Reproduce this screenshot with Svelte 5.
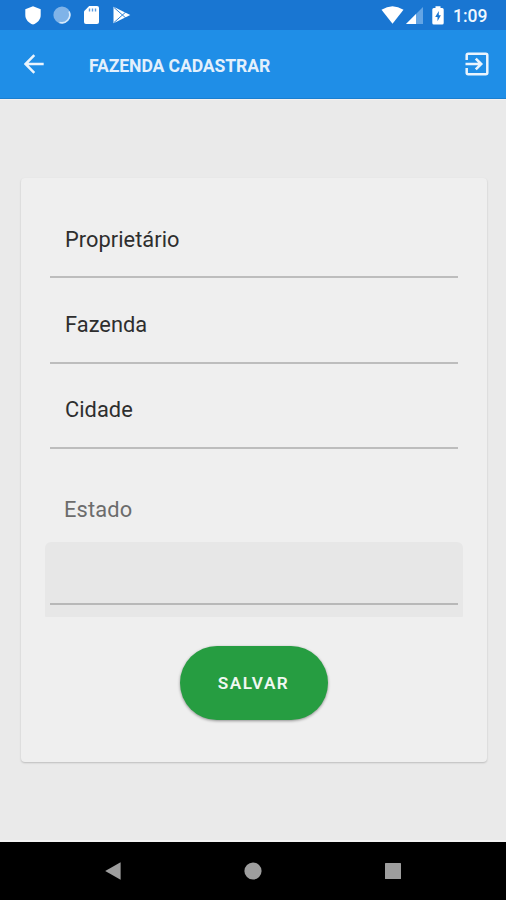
<script lang="ts">
  let farm = $state({ owner: '', name: '', city: '', region: '' })

  const fields = [
    { key: 'owner', label: 'Proprietário' },
    { key: 'name', label: 'Fazenda' },
    { key: 'city', label: 'Cidade' },
  ] as const
</script>

<div class="screen">
  <div class="status-bar">
    <div class="notifications">
      <svg width="16" height="19" viewBox="0 0 16 19">
        <path d="M8 0.3 L15.7 3.2 V9 C15.7 13.5 12.4 17 8 18.6 C3.6 17 0.3 13.5 0.3 9 V3.2 Z" fill="#fff" />
      </svg>
      <svg class="sync" width="18" height="18" viewBox="0 0 18 18">
        <circle cx="9" cy="9" r="8.6" fill="#7fb3e8" />
        <path d="M16 5.5 A7.9 7.9 0 0 1 6.5 16.4" fill="none" stroke="#d8eafb" stroke-width="1.6" />
      </svg>
      <svg class="sd" width="15" height="18" viewBox="0 0 15 18">
        <path d="M5.2 0 H13 Q15 0 15 2 V16 Q15 18 13 18 H2 Q0 18 0 16 V5.2 Z" fill="#fff" />
        <path d="M5.5 2.5 V5.6 M8.5 2.5 V5.6 M11.5 2.5 V5.6" stroke="#5b9bdf" stroke-width="1.4" />
      </svg>
      <svg class="play" width="18" height="18" viewBox="0 0 18 18">
        <path d="M0.5 0.8 L17.3 9 L0.5 17.2 Z" fill="#fff" />
        <path d="M1 1.5 L12.8 12 M1 16.5 L12.8 6" stroke="#1976d2" stroke-width="0.9" />
      </svg>
    </div>
    <div class="system">
      <svg width="23" height="18" viewBox="0 0 23 18">
        <path d="M0.5 3.7 Q11.5 -3.4 22.5 3.7 L11.5 17.8 Z" fill="#fff" />
      </svg>
      <svg class="signal" width="17" height="17" viewBox="0 0 17 17">
        <path d="M17 0 V17 H0 Z" fill="#64a5e5" />
        <path d="M10 7 V17 H0 Z" fill="#fff" />
      </svg>
      <svg class="battery" width="12" height="19" viewBox="0 0 12 19">
        <path d="M3.5 0.3 H8.5 V2 H10.2 Q11.7 2 11.7 3.5 V17 Q11.7 18.6 10.2 18.6 H1.8 Q0.3 18.6 0.3 17 V3.5 Q0.3 2 1.8 2 H3.5 Z" fill="#fff" />
        <path d="M6.8 5 L3.2 11 H5.5 V15.2 L8.9 9.3 H6.8 Z" fill="#1976d2" />
      </svg>
      <span class="clock">1:09</span>
    </div>
  </div>

  <header class="toolbar">
    <button class="icon-btn" aria-label="Voltar">
      <svg width="20" height="20" viewBox="0 0 20 20">
        <path d="M19.7 10 H1.8 M10.3 1.2 L1.5 10 L10.3 18.8" fill="none" stroke="#eaf4fd" stroke-width="2.5" />
      </svg>
    </button>
    <h1>FAZENDA CADASTRAR</h1>
    <button class="icon-btn exit" aria-label="Sair">
      <svg width="24" height="24" viewBox="0 0 24 24">
        <path d="M1.7 8 V3.2 Q1.7 1.7 3.2 1.7 H20.8 Q22.3 1.7 22.3 3.2 V20.8 Q22.3 22.3 20.8 22.3 H3.2 Q1.7 22.3 1.7 20.8 V16" fill="none" stroke="#eaf4fd" stroke-width="2.5" />
        <path d="M0.5 12 H16 M10.8 6.6 L16.2 12 L10.8 17.4" fill="none" stroke="#eaf4fd" stroke-width="2.6" />
      </svg>
    </button>
  </header>

  <main>
    <form class="card">
      {#each fields as field}
        <label class="field">
          <input type="text" placeholder={field.label} bind:value={farm[field.key]} />
        </label>
      {/each}

      <span class="select-label">Estado</span>
      <button type="button" class="select" aria-label="Estado">
        <span class="select-value">{farm.region}</span>
      </button>

      <button type="button" class="save">SALVAR</button>
    </form>
  </main>

  <nav class="nav-bar">
    <svg width="16" height="18" viewBox="0 0 16 18">
      <path d="M15.6 0.3 V17.7 L0.2 9 Z" fill="#9e9e9e" />
    </svg>
    <svg width="18" height="18" viewBox="0 0 18 18">
      <circle cx="9" cy="9" r="8.6" fill="#9e9e9e" />
    </svg>
    <svg width="16" height="16" viewBox="0 0 16 16">
      <rect width="16" height="16" rx="0.5" fill="#9e9e9e" />
    </svg>
  </nav>
</div>

<style>
  :global(body) {
    margin: 0;
  }

  .screen {
    display: flex;
    flex-direction: column;
    width: 506px;
    height: 900px;
    overflow: hidden;
    background: #eaeaea;
    font-family: Roboto, sans-serif;
  }

  svg {
    display: block;
    flex: none;
  }

  button {
    padding: 0;
    border: none;
    background: none;
    font-family: inherit;
    cursor: pointer;
  }

  .status-bar {
    display: flex;
    justify-content: space-between;
    box-sizing: border-box;
    height: 30px;
    padding: 0 18.5px 0 25px;
    background: #1976d2;
  }

  .notifications,
  .system {
    display: flex;
    align-items: center;
  }

  .sync { margin-left: 12px; }
  .sd { margin-left: 13px; }
  .play { margin-left: 14px; }
  .signal { margin-left: 2px; }
  .battery { margin-left: 9px; }

  .clock {
    margin-left: 9px;
    padding-top: 2px;
    font-size: 17.5px;
    font-weight: 500;
    line-height: 28px;
    color: #f0f7fe;
  }

  .toolbar {
    display: flex;
    align-items: center;
    box-sizing: border-box;
    height: 69px;
    padding: 0 17px 0 24px;
    border-bottom: 1px solid #1a7fd0;
    background: #1f8ee7;
  }

  h1 {
    margin: 3px 0 0 45px;
    font-size: 17.6px;
    font-weight: 700;
    line-height: 24px;
    letter-spacing: -0.1px;
    color: #e3f0fc;
    white-space: nowrap;
  }

  .exit {
    margin-left: auto;
  }

  main {
    flex: 1;
    padding: 78px 19px 0 21px;
    border-top: 1px solid #f3f1f1;
    border-bottom: 2px solid #f4f4f4;
  }

  .card {
    display: flex;
    flex-direction: column;
    box-sizing: border-box;
    height: 584px;
    padding: 15px 24px 0 24px;
    border-radius: 4px;
    background: #efefef;
    box-shadow: 0 1px 2px rgba(0, 0, 0, 0.2);
  }

  .field {
    display: flex;
    flex: none;
    box-sizing: border-box;
    height: 85.3px;
    margin: 0 5px;
    padding: 9px 15px 0;
    border-bottom: 2px solid #bdbdbd;
  }

  input {
    width: 100%;
    padding: 0;
    border: none;
    outline: none;
    background: none;
    font-family: inherit;
    font-size: 21.8px;
    letter-spacing: 0.05px;
    color: #2b2b2b;
  }

  input::placeholder {
    color: #2e2e2e;
    opacity: 1;
  }

  .select-label {
    margin: 46px 0 0 19px;
    font-size: 21.8px;
    line-height: 30px;
    letter-spacing: 0.15px;
    color: #6c6c6c;
  }

  .select {
    display: flex;
    flex: none;
    box-sizing: border-box;
    height: 75px;
    margin-top: 17px;
    padding: 0 5px 12px;
    border-radius: 6px 6px 1px 1px;
    background: #e7e7e7;
  }

  .select-value {
    flex: 1;
    align-self: stretch;
    border-bottom: 2px solid #b8b8b8;
  }

  .save {
    align-self: center;
    flex: none;
    width: 148px;
    height: 74px;
    margin: 29px 1px 0 0;
    border-radius: 37px;
    background: #269d41;
    box-shadow: 0 1px 3px rgba(0, 0, 0, 0.4);
    color: #f0f8f2;
    font-size: 17.2px;
    font-weight: 600;
    letter-spacing: 1.5px;
  }

  .nav-bar {
    display: flex;
    align-items: center;
    justify-content: space-between;
    box-sizing: border-box;
    height: 58px;
    padding: 0 105px;
    background: #000;
  }
</style>
